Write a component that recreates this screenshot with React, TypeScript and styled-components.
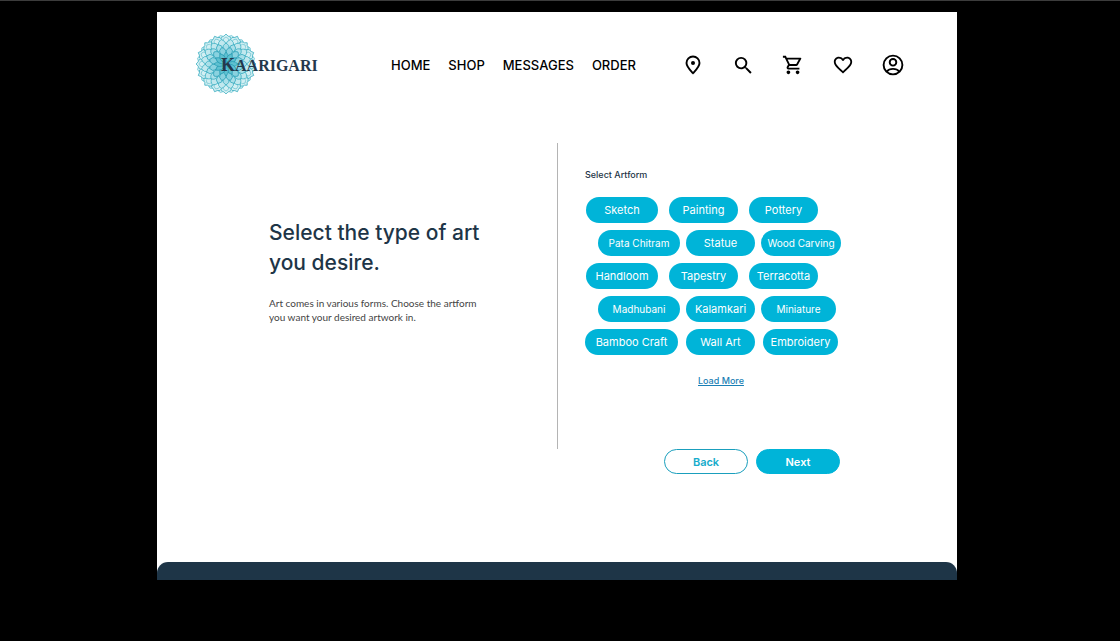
import React from "react";
import styled, { createGlobalStyle } from "styled-components";
import { MdSearch, MdOutlineShoppingCart, MdFavoriteBorder } from "react-icons/md";

const navy = "#1e3547";
const cyan = "#00b4d8";

const GlobalStyle = createGlobalStyle`
  * { box-sizing: border-box; }
  body {
    margin: 0;
    background: #000;
    font-family: Inter, "Open Sans", sans-serif;
  }
`;

const Backdrop = styled.div`
  border-top: 1px solid #3c3c3c;
  padding: 11px 6px 60px 0;
`;

const Card = styled.div`
  max-width: 800px;
  margin: 0 auto;
  background: #fff;
`;

const Header = styled.header`
  display: flex;
  align-items: center;
  padding: 22px 52px 0 39px;
`;

const LogoLink = styled.a`
  display: block;
  height: 62px;
`;

const Nav = styled.nav`
  display: flex;
  gap: 18px;
  margin-left: 69px;
`;

const NavLink = styled.a`
  color: #000;
  font-size: 13px;
  font-weight: 500;
  line-height: 20px;
  text-decoration: none;
`;

const Tools = styled.div`
  display: flex;
  gap: 26px;
  margin-left: auto;
`;

const IconButton = styled.button`
  display: flex;
  align-items: center;
  justify-content: center;
  width: 24px;
  height: 24px;
  padding: 0;
  border: 0;
  background: none;
  color: #000;
  cursor: pointer;
`;

const Main = styled.main`
  padding: 47px 117px 88px 0;
`;

const Columns = styled.div`
  display: flex;
  min-height: 306px;
`;

const Intro = styled.section`
  flex: 0 0 400px;
  padding: 75px 60px 0 112px;
`;

const Title = styled.h1`
  margin: 0 0 18px;
  color: ${navy};
  font-size: 21px;
  font-weight: 500;
  line-height: 30px;
`;

const Lead = styled.p`
  margin: 0;
  color: #444;
  font-family: Lato, sans-serif;
  font-size: 10px;
  line-height: 14px;
`;

const Picker = styled.section`
  flex: 1;
  padding: 25px 0 0 27px;
  border-left: 1px solid #b4b4b4;
`;

const PickerTitle = styled.h2`
  margin: 0 0 15px;
  color: ${navy};
  font-size: 9px;
  font-weight: 500;
  line-height: 14px;
`;

const ChipRows = styled.div`
  display: flex;
  flex-direction: column;
  gap: 7px;
`;

const ChipRow = styled.div<{ $indent: number; $gap: number }>`
  display: flex;
  gap: ${(p) => p.$gap}px;
  padding-left: ${(p) => p.$indent}px;
`;

const Chip = styled.button<{ $width: number; $small?: boolean }>`
  flex: none;
  width: ${(p) => p.$width}px;
  height: 26px;
  padding: 0;
  border: 0;
  border-radius: 13px;
  background: ${cyan};
  color: #fff;
  font-family: inherit;
  font-size: ${(p) => (p.$small ? 10 : 11)}px;
  font-weight: 400;
  white-space: nowrap;
  cursor: pointer;
`;

const LoadMore = styled.a`
  display: block;
  width: max-content;
  margin: 19px 0 0 113px;
  color: #1a7fb5;
  font-size: 9px;
  font-weight: 500;
  line-height: 14px;
  text-decoration: underline;
`;

const Actions = styled.div`
  display: flex;
  justify-content: flex-end;
  gap: 8px;
`;

const ActionButton = styled.button<{ $primary?: boolean }>`
  width: 84px;
  height: 25px;
  padding: 0;
  border: 1px solid ${(p) => (p.$primary ? cyan : "#1a9fbd")};
  border-radius: 13px;
  background: ${(p) => (p.$primary ? cyan : "#fff")};
  color: ${(p) => (p.$primary ? "#fff" : "#16accb")};
  font-family: inherit;
  font-size: 11px;
  font-weight: 600;
  cursor: pointer;
`;

const Footer = styled.footer`
  height: 18px;
  border-radius: 11px 11px 0 0;
  background: ${navy};
`;

type Ring = { count: number; offset: number; d: string; width: number; color: string; fill?: string };

const rings: Ring[] = [
  { count: 16, offset: 11.25, d: "M-5 -24 Q-4 -28 0 -29 Q4 -28 5 -24 L0 -20Z", width: 0.7, color: "#5fc0cf", fill: "#d3eff3" },
  { count: 16, offset: 0, d: "M-6 -23 Q-5 -28 -2 -28 L0 -30 L2 -28 Q5 -28 6 -23 Q3 -20 0 -20 Q-3 -20 -6 -23Z", width: 0.8, color: "#45b2c4", fill: "#d3eff3" },
  { count: 16, offset: 0, d: "M-3 -23 Q-3 -26 0 -27 Q3 -26 3 -23 L0 -21Z", width: 0.6, color: "#5abccb" },
  { count: 16, offset: 11.25, d: "M-4 -19 Q-4 -23 0 -25 Q4 -23 4 -19 L0 -15Z", width: 0.7, color: "#43b2c5", fill: "#c1e8ee" },
  { count: 16, offset: 0, d: "M-3 -15 Q-4 -19 0 -21 Q4 -19 3 -15 Q0 -11 -3 -15Z", width: 0.7, color: "#2ea7bd", fill: "#a9dfe8" },
  { count: 12, offset: 15, d: "M-3 -11 Q-4 -15 0 -17 Q4 -15 3 -11 L0 -7Z", width: 0.7, color: "#249db5", fill: "#8ad2df" },
  { count: 12, offset: 0, d: "M0 0 Q-5 -7 0 -12 Q5 -7 0 0Z", width: 0.7, color: "#2199b2", fill: "#5fc0d0" },
];

const Logo = () => (
  <svg width="126" height="62" viewBox="0 0 126 62" role="img" aria-label="Kaarigari">
    <g transform="translate(30 30)">
      {rings.map((ring, i) =>
        Array.from({ length: ring.count }, (_, n) => (
          <path
            key={`${i}-${n}`}
            d={ring.d}
            fill={ring.fill ?? "none"}
            stroke={ring.color}
            strokeWidth={ring.width}
            transform={`rotate(${ring.offset + (n * 360) / ring.count})`}
          />
        ))
      )}
    </g>
    <text x="25" y="37" fill="#24384c" fontFamily='"Liberation Serif", serif' fontWeight="700">
      <tspan fontSize="18">K</tspan>
      <tspan fontSize="16">AARIGARI</tspan>
    </text>
  </svg>
);

const PinIcon = () => (
  <svg width="24" height="24" viewBox="0 0 24 24" aria-hidden="true">
    <path d="M12 3.5a6.5 6.5 0 0 0-6.5 6.5c0 3.600 3.100 6.500 6.500 10.200 3.400-3.700 6.500-6.600 6.500-10.200A6.500 6.500 0 0 0 12 3.500Z" fill="none" stroke="currentColor" strokeWidth="1.9" />
    <circle cx="12" cy="10" r="2" fill="currentColor" />
  </svg>
);

const AccountIcon = () => (
  <svg width="24" height="24" viewBox="0 0 24 24" fill="none" stroke="currentColor" strokeWidth="1.9" aria-hidden="true">
    <circle cx="12" cy="12" r="9.4" />
    <circle cx="12" cy="9.3" r="3.3" />
    <path d="M5.6 18.6C7.2 16.7 9.5 15.9 12 15.9C14.5 15.9 16.8 16.7 18.4 18.6" />
  </svg>
);

type ChipItem = { label: string; width: number; small?: boolean };
type Row = { indent: number; gap: number; chips: ChipItem[] };

const rows: Row[] = [
  { indent: 1, gap: 11, chips: [{ label: "Sketch", width: 72 }, { label: "Painting", width: 69 }, { label: "Pottery", width: 69 }] },
  { indent: 13, gap: 6, chips: [{ label: "Pata Chitram", width: 82, small: true }, { label: "Statue", width: 69 }, { label: "Wood Carving", width: 80, small: true }] },
  { indent: 1, gap: 11, chips: [{ label: "Handloom", width: 72 }, { label: "Tapestry", width: 69 }, { label: "Terracotta", width: 69 }] },
  { indent: 13, gap: 6, chips: [{ label: "Madhubani", width: 82, small: true }, { label: "Kalamkari", width: 69 }, { label: "Miniature", width: 75, small: true }] },
  { indent: 0, gap: 8, chips: [{ label: "Bamboo Craft", width: 93 }, { label: "Wall Art", width: 69 }, { label: "Embroidery", width: 75 }] },
];

export default function App() {
  return (
    <>
      <GlobalStyle />
      <Backdrop>
        <Card>
          <Header>
            <LogoLink href="#home"><Logo /></LogoLink>
            <Nav>
              <NavLink href="#home">HOME</NavLink>
              <NavLink href="#shop">SHOP</NavLink>
              <NavLink href="#messages">MESSAGES</NavLink>
              <NavLink href="#order">ORDER</NavLink>
            </Nav>
            <Tools>
              <IconButton aria-label="Location"><PinIcon /></IconButton>
              <IconButton aria-label="Search"><MdSearch size={23} /></IconButton>
              <IconButton aria-label="Cart"><MdOutlineShoppingCart size={22} /></IconButton>
              <IconButton aria-label="Favourites"><MdFavoriteBorder size={22} /></IconButton>
              <IconButton aria-label="Account"><AccountIcon /></IconButton>
            </Tools>
          </Header>
          <Main>
            <Columns>
              <Intro>
                <Title>Select the type of art<br />you desire.</Title>
                <Lead>Art comes in various forms. Choose the artform<br />you want your desired artwork in.</Lead>
              </Intro>
              <Picker>
                <PickerTitle>Select Artform</PickerTitle>
                <ChipRows>
                  {rows.map((row, i) => (
                    <ChipRow key={i} $indent={row.indent} $gap={row.gap}>
                      {row.chips.map((chip) => (
                        <Chip key={chip.label} $width={chip.width} $small={chip.small}>{chip.label}</Chip>
                      ))}
                    </ChipRow>
                  ))}
                </ChipRows>
                <LoadMore href="#more">Load More</LoadMore>
              </Picker>
            </Columns>
            <Actions>
              <ActionButton>Back</ActionButton>
              <ActionButton $primary>Next</ActionButton>
            </Actions>
          </Main>
          <Footer />
        </Card>
      </Backdrop>
    </>
  );
}
